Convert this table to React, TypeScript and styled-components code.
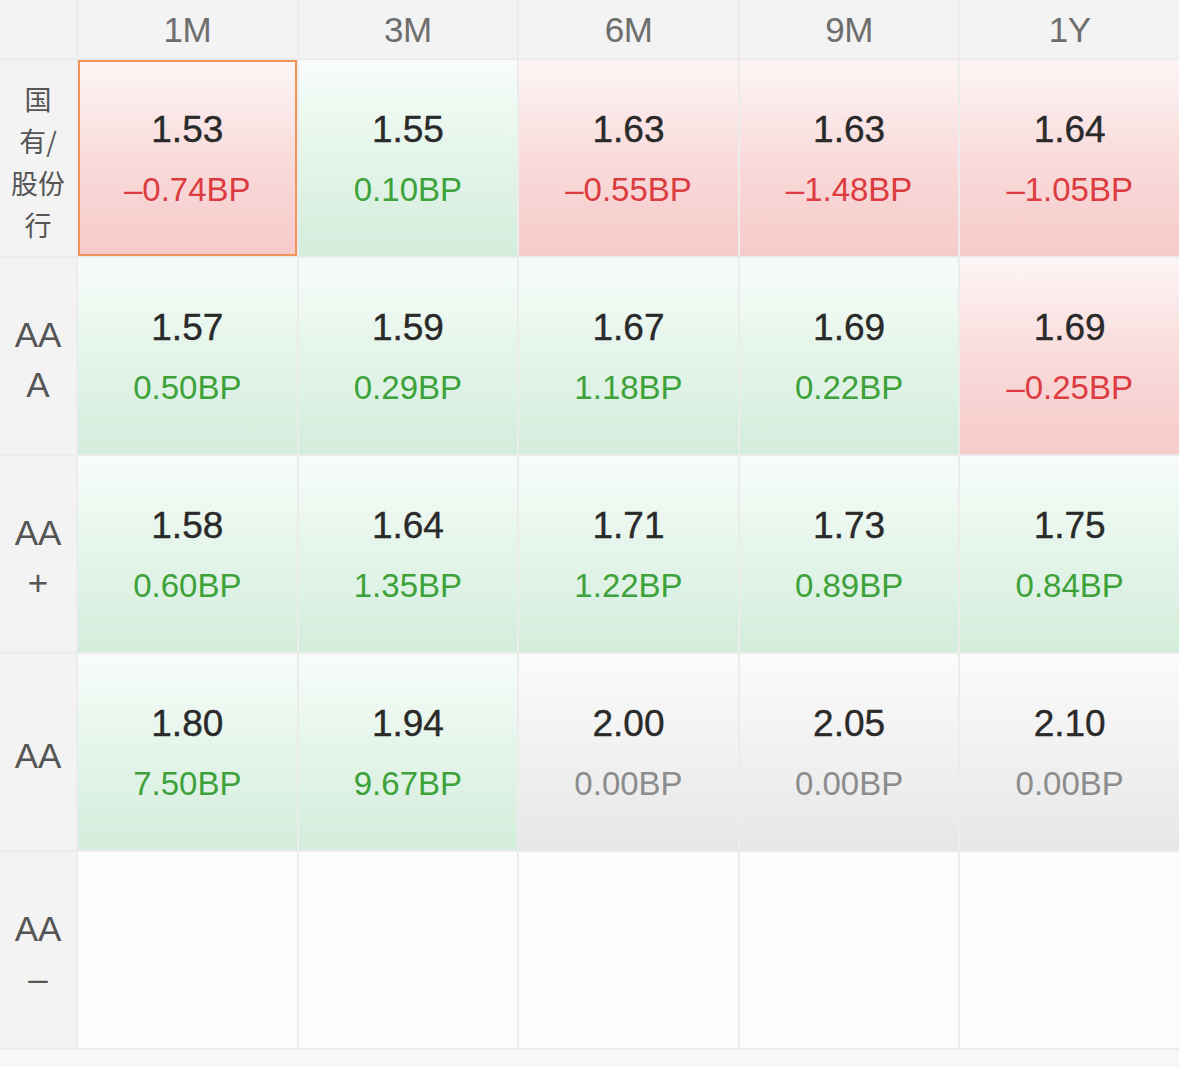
import React from "react";
import styled, { createGlobalStyle, css } from "styled-components";

const Global = createGlobalStyle`
  html, body { margin: 0; padding: 0; background: #f6f7f9; }
  body { font-family: "Liberation Sans", Arial, "Noto Sans CJK SC", sans-serif; }
`;

type Tone = "up" | "down" | "flat" | "empty";

const Grid = styled.div`
  display: grid;
  grid-template-columns: 76px repeat(5, 1fr);
  grid-template-rows: 58px repeat(5, 196px);
  gap: 2px;
  background: #ececec;
  border-bottom: 2px solid #ececec;
  width: 1179px;
`;

const HeadCell = styled.div`
  background: #f3f3f3;
  display: flex;
  align-items: center;
  justify-content: center;
  color: #6e6e6e;
  font-size: 35px;
  letter-spacing: -0.5px;
  padding-top: 2px;
`;

const LabelCell = styled.div<{ $cjk?: boolean }>`
  background: #f3f3f3;
  display: flex;
  flex-direction: column;
  align-items: center;
  justify-content: center;
  padding-top: 8px;
  color: #555;
  font-size: ${(p) => (p.$cjk ? "27px" : "35px")};
  line-height: ${(p) => (p.$cjk ? "42px" : "50px")};
  font-family: ${(p) =>
    p.$cjk
      ? `"Noto Sans CJK SC", "Liberation Sans", sans-serif`
      : `"Liberation Sans", Arial, sans-serif`};
`;

const tones = {
  up: css`
    background: linear-gradient(180deg, #fdf5f5 0%, #f9d9d9 55%, #f7caca 100%);
  `,
  down: css`
    background: linear-gradient(180deg, #f7fcf9 0%, #e2f4e8 55%, #d3eddc 100%);
  `,
  flat: css`
    background: linear-gradient(180deg, #fbfbfb 0%, #f0f0f0 55%, #e7e7e7 100%);
  `,
  empty: css`
    background: #fcfcfc;
  `,
};

const DataCell = styled.div<{ $tone: Tone; $selected?: boolean }>`
  ${(p) => tones[p.$tone]}
  box-sizing: border-box;
  display: flex;
  flex-direction: column;
  align-items: center;
  justify-content: center;
  gap: 16px;
  padding-top: 4px;
  ${(p) =>
    p.$selected &&
    css`
      border: 2px solid #f0955a;
    `}
`;

const Value = styled.div`
  font-size: 37px;
  line-height: 44px;
  color: #2a2a2a;
  -webkit-text-stroke: 0.4px #2a2a2a;
`;

const deltaColors: Record<Tone, string> = {
  up: "#dc3b40",
  down: "#3ea23a",
  flat: "#8c8c8c",
  empty: "#8c8c8c",
};

const Delta = styled.div<{ $tone: Tone }>`
  font-size: 33px;
  line-height: 44px;
  color: ${(p) => deltaColors[p.$tone]};
`;

type Cell = { v: string; d: string; t: Tone } | null;

const cols = ["1M", "3M", "6M", "9M", "1Y"];

const rows: { label: string[]; cjk?: boolean; cells: Cell[] }[] = [
  {
    label: ["国", "有/", "股份", "行"],
    cjk: true,
    cells: [
      { v: "1.53", d: "–0.74BP", t: "up" },
      { v: "1.55", d: "0.10BP", t: "down" },
      { v: "1.63", d: "–0.55BP", t: "up" },
      { v: "1.63", d: "–1.48BP", t: "up" },
      { v: "1.64", d: "–1.05BP", t: "up" },
    ],
  },
  {
    label: ["AA", "A"],
    cells: [
      { v: "1.57", d: "0.50BP", t: "down" },
      { v: "1.59", d: "0.29BP", t: "down" },
      { v: "1.67", d: "1.18BP", t: "down" },
      { v: "1.69", d: "0.22BP", t: "down" },
      { v: "1.69", d: "–0.25BP", t: "up" },
    ],
  },
  {
    label: ["AA", "+"],
    cells: [
      { v: "1.58", d: "0.60BP", t: "down" },
      { v: "1.64", d: "1.35BP", t: "down" },
      { v: "1.71", d: "1.22BP", t: "down" },
      { v: "1.73", d: "0.89BP", t: "down" },
      { v: "1.75", d: "0.84BP", t: "down" },
    ],
  },
  {
    label: ["AA"],
    cells: [
      { v: "1.80", d: "7.50BP", t: "down" },
      { v: "1.94", d: "9.67BP", t: "down" },
      { v: "2.00", d: "0.00BP", t: "flat" },
      { v: "2.05", d: "0.00BP", t: "flat" },
      { v: "2.10", d: "0.00BP", t: "flat" },
    ],
  },
  {
    label: ["AA", "–"],
    cells: [null, null, null, null, null],
  },
];

export default function App() {
  return (
    <>
      <Global />
      <Grid>
        <HeadCell />
        {cols.map((c) => (
          <HeadCell key={c}>{c}</HeadCell>
        ))}
        {rows.map((r, ri) => (
          <React.Fragment key={ri}>
            <LabelCell $cjk={r.cjk}>
              {r.label.map((l, i) => (
                <span key={i}>{l}</span>
              ))}
            </LabelCell>
            {r.cells.map((c, ci) =>
              c ? (
                <DataCell key={ci} $tone={c.t} $selected={ri === 0 && ci === 0}>
                  <Value>{c.v}</Value>
                  <Delta $tone={c.t}>{c.d}</Delta>
                </DataCell>
              ) : (
                <DataCell key={ci} $tone="empty" />
              )
            )}
          </React.Fragment>
        ))}
      </Grid>
    </>
  );
}
